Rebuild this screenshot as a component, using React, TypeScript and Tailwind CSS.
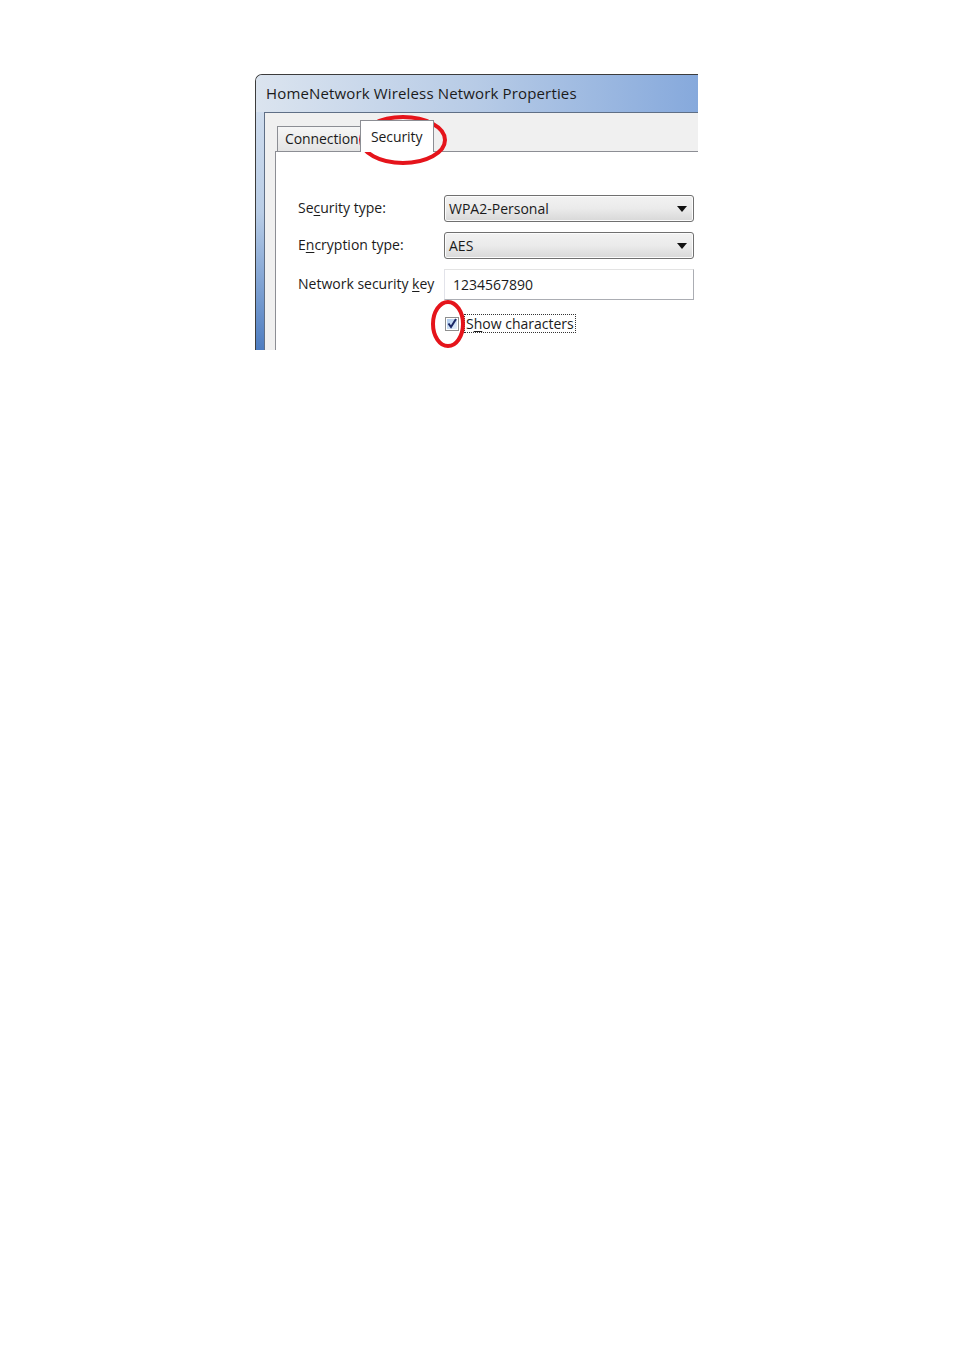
import React from "react";

function Mn({ children }: { children: React.ReactNode }) {
  return <span className="underline underline-offset-2 decoration-1">{children}</span>;
}

function Combo({ value }: { value: string }) {
  return (
    <div className="h-[27px] w-[250px] rounded-[3px] border border-[#707070] bg-gradient-to-b from-[#f2f2f2] via-[#ebebeb] to-[#d8d8d8] flex items-center pl-[4px] pr-[6px] shadow-[inset_0_0_0_1px_#fcfcfc]">
      <span className="flex-1 text-[14px] text-[#1a1a1a] leading-none">{value}</span>
      <svg width="10" height="6" viewBox="0 0 10 6">
        <path d="M0 0 H10 L5 6 Z" fill="#111" />
      </svg>
    </div>
  );
}

export default function App() {
  return (
    <div className="min-h-[1350px] w-[954px] bg-white" style={{ fontFamily: '"Open Sans", "Noto Sans", sans-serif' }}>
      <div className="pl-[255px] pt-[74px]">
        <div className="relative w-[443px] h-[276px] overflow-hidden rounded-tl-[7px] border-l border-t border-[#3c3c3c] bg-gradient-to-b from-[#d7e2f0] via-[#b9cde6] to-[#4d7cc0]">
          {/* title bar */}
          <div className="h-[37px] flex items-center pl-[10px] bg-gradient-to-r from-[#dbe4ef] via-[#b7cbe6] to-[#86a9dc]">
            <span className="text-[15px] tracking-[0.15px] text-[#1b1b1b] leading-none">
              HomeNetwork Wireless Network Properties
            </span>
          </div>
          {/* client */}
          <div className="ml-[8px] h-full border-l border-t border-[#5f6f86] bg-[#f0f0f0] pl-[10px] pt-[6px]">
            {/* tabs */}
            <div className="relative h-[32px] flex items-end">
              <div className="ml-[2px] h-[25px] w-[84px] overflow-hidden whitespace-nowrap border border-b-0 border-[#8c8e94] bg-gradient-to-b from-[#f6f6f6] to-[#e4e4e4] px-[7px] pt-[2px] text-[14px] tracking-[-0.1px] text-[#1b1b1b] leading-[20px]">
                Connection
              </div>
              <div className="relative z-10 -ml-[1px] mb-[-1px] h-[32px] w-[74px] border border-b-0 border-[#8c8e94] bg-white px-[10px] pt-[7px] text-[14px] tracking-[-0.1px] text-[#1b1b1b] leading-[18px]">
                Security
              </div>
            </div>
            <div className="h-[250px] border-l border-t border-[#8c8e94] bg-white pl-[22px] pt-[43px]">
              <div className="grid grid-cols-[146px_250px] gap-y-[10px] items-center text-[14px] tracking-[0px] text-[#1b1b1b]">
                <div className="leading-none -mt-[2px]">Se<Mn>c</Mn>urity type:</div>
                <Combo value="WPA2-Personal" />
                <div className="leading-none -mt-[2px]">E<Mn>n</Mn>cryption type:</div>
                <Combo value="AES" />
                <div className="leading-none -mt-[2px]">Network security <Mn>k</Mn>ey</div>
                <div className="h-[31px] border border-[#abadb3] border-t-[#e3e3e3] border-l-[#e2e3ea] bg-white flex items-center pl-[8px] leading-none">
                  1234567890
                </div>
              </div>
              <div className="ml-[147px] mt-[14px] flex items-center">
                <div className="h-[14px] w-[14px] border border-[#8e8f8f] bg-white p-[1px]">
                  <div className="h-full w-full bg-gradient-to-br from-[#aecbee] to-[#e6f0fb] relative">
                    <svg className="absolute left-[-1px] top-[-2px]" width="13" height="13" viewBox="0 0 13 13">
                      <path d="M2.5 6.5 L5 10 L10 2" stroke="#1a2766" strokeWidth="2" fill="none" />
                    </svg>
                  </div>
                </div>
                <div className="ml-[5px] border border-dotted border-[#333] px-[1px] text-[14px] tracking-[0px] text-[#1b1b1b] leading-[17px]">
                  S<Mn>h</Mn>ow characters
                </div>
              </div>
            </div>
          </div>
          {/* annotation ellipses */}
          <svg className="absolute left-0 top-0 pointer-events-none" width="443" height="276" viewBox="0 0 443 276">
            <ellipse cx="147" cy="65" rx="42" ry="23" fill="none" stroke="#e5141b" strokeWidth="4" />
            <ellipse cx="192" cy="249" rx="15" ry="22" fill="none" stroke="#e5141b" strokeWidth="4" />
          </svg>
        </div>
      </div>
    </div>
  );
}
